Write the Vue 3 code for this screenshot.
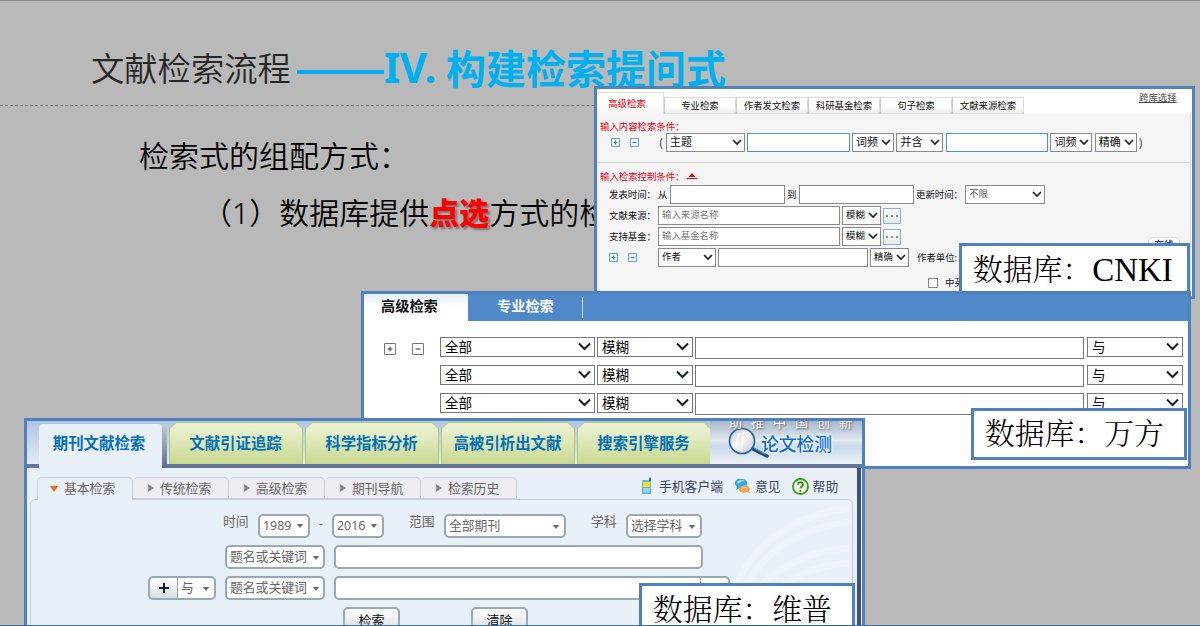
<script setup>
const cnkiTabs = ['高级检索', '专业检索', '作者发文检索', '科研基金检索', '句子检索', '文献来源检索']
const sources = [
  { label: '文献来源：', hint: '输入来源名称' },
  { label: '支持基金：', hint: '输入基金名称' },
]
const vipTabs = ['期刊文献检索', '文献引证追踪', '科学指标分析', '高被引析出文献', '搜索引擎服务']
const vipSubTabs = ['基本检索', '传统检索', '高级检索', '期刊导航', '检索历史']
</script>

<template>
  <div class="slide">
    <header class="title">
      <span class="titleMain">文献检索流程</span>
      <span class="dash"></span>
      <span class="numeral">IV.</span>
      <span class="titleSub">构建检索提问式</span>
    </header>
    <p class="line1">检索式的组配方式：</p>
    <p class="line2">（1）数据库提供<b>点选</b>方式的检</p>

    <!-- CNKI -->
    <section class="window cnki">
      <div class="cnkiTabs">
        <span v-for="(tab, i) in cnkiTabs" :key="tab" class="cnkiTab" :class="{ active: i === 0 }">{{ tab }}</span>
        <a class="cross">跨库选择</a>
      </div>
      <div class="cnkiPanel">
        <div class="red first">输入内容检索条件：</div>
        <div class="row contentRow">
          <svg class="sq" viewBox="0 0 9 9"><path d="M.5.5h8v8h-8z" /><path d="M2.500 4.500h4M4.500 2.500v4" class="mark" /></svg>
          <svg class="sq second" viewBox="0 0 9 9"><path d="M.5.5h8v8h-8z" /><path d="M2.500 4.500h4" class="mark" /></svg>
          <span class="paren">(</span>
          <div class="select subject">主题<svg viewBox="0 0 10 7"><path d="M1 1l4 4 4-4" /></svg></div>
          <div class="input blue"></div>
          <div class="select freq">词频<svg viewBox="0 0 10 7"><path d="M1 1l4 4 4-4" /></svg></div>
          <div class="select join">并含<svg viewBox="0 0 10 7"><path d="M1 1l4 4 4-4" /></svg></div>
          <div class="input blue"></div>
          <div class="select freq">词频<svg viewBox="0 0 10 7"><path d="M1 1l4 4 4-4" /></svg></div>
          <div class="select freq">精确<svg viewBox="0 0 10 7"><path d="M1 1l4 4 4-4" /></svg></div>
          <span class="parenEnd">)</span>
        </div>
        <div class="rule"></div>
        <div class="red control">
          输入检索控制条件：
          <svg viewBox="0 0 12 8"><path d="M6 1l3.500 4h-7zM1 6h10v1H1z" /></svg>
        </div>
        <div class="row dateRow">
          <span class="label">发表时间：</span>
          <span class="from">从</span>
          <div class="input date"></div>
          <span class="to">到</span>
          <div class="input date"></div>
          <span class="update">更新时间：</span>
          <div class="select limit">不限<svg viewBox="0 0 10 7"><path d="M1 1l4 4 4-4" /></svg></div>
        </div>
        <div v-for="s in sources" :key="s.label" class="row sourceRow">
          <span class="label">{{ s.label }}</span>
          <div class="input source">{{ s.hint }}</div>
          <div class="select small">模糊<svg viewBox="0 0 10 7"><path d="M1 1l4 4 4-4" /></svg></div>
          <div class="more"><i></i><i></i><i></i></div>
        </div>
        <div class="row authorRow">
          <svg class="sq" viewBox="0 0 9 9"><path d="M.5.5h8v8h-8z" /><path d="M2.500 4.500h4M4.500 2.500v4" class="mark" /></svg>
          <svg class="sq second" viewBox="0 0 9 9"><path d="M.5.5h8v8h-8z" /><path d="M2.500 4.500h4" class="mark" /></svg>
          <div class="select author">作者<svg viewBox="0 0 10 7"><path d="M1 1l4 4 4-4" /></svg></div>
          <div class="input name"></div>
          <div class="select small">精确<svg viewBox="0 0 10 7"><path d="M1 1l4 4 4-4" /></svg></div>
          <span class="unit">作者单位:</span>
        </div>
        <div class="row checkRow"><span class="box"></span>中英</div>
      </div>
      <div class="online">在线</div>
    </section>
    <div class="tag tagCnki">数据库：<span>CNKI</span></div>

    <!-- Wanfang -->
    <section class="window wanfang">
      <div class="wfBar">
        <span class="wfTab active">高级检索</span>
        <span class="wfTab">专业检索</span>
      </div>
      <div class="wfRows">
        <div v-for="n in 3" :key="n" class="wfRow">
          <div class="wfIcons">
            <template v-if="n === 1">
              <svg viewBox="0 0 12 12"><path d="M.5.5h11v11H.5z" /><path d="M3.500 6h5M6 3.500v5" class="mark" /></svg>
              <svg viewBox="0 0 12 12"><path d="M.5.5h11v11H.5z" /><path d="M3.500 6h5" class="mark" /></svg>
            </template>
          </div>
          <div class="wfSelect field">全部<svg viewBox="0 0 13 9"><path d="M1 1.500l5.500 5.500 5.500-5.500" /></svg></div>
          <div class="wfSelect match">模糊<svg viewBox="0 0 13 9"><path d="M1 1.500l5.500 5.500 5.500-5.500" /></svg></div>
          <div class="wfInput"></div>
          <div class="wfSelect match">与<svg viewBox="0 0 13 9"><path d="M1 1.500l5.500 5.500 5.500-5.500" /></svg></div>
        </div>
      </div>
    </section>
    <div class="tag tagWanfang">数据库：<span>万方</span></div>

    <!-- VIP -->
    <section class="window vip">
      <div class="vipTop">
        <span v-for="(tab, i) in vipTabs" :key="tab" class="vipTab" :class="{ active: i === 0 }"><em>{{ tab }}</em></span>
        <div class="banner">
          <div class="slogan">助推中国创新</div>
          <svg class="lens" viewBox="0 0 42 34">
            <defs>
              <linearGradient id="glass" x1="0" y1="0" x2="1" y2="1">
                <stop offset="0" stop-color="#c5c9cc" />
                <stop offset=".5" stop-color="#f4f5f6" />
                <stop offset="1" stop-color="#bcc6cf" />
              </linearGradient>
            </defs>
            <path d="M25 23l14 7" stroke="#174f7b" stroke-width="3.500" stroke-linecap="round" />
            <path d="M26 22l11 6" stroke="#62a6d5" stroke-width="1" />
            <circle cx="14" cy="15" r="12.500" fill="url(#glass)" stroke="#246797" stroke-width="1.700" />
            <path d="M8 21l3-14M13 25l3-19" stroke="#fff" stroke-width="2" opacity=".6" />
          </svg>
          <span class="check">论文检测</span>
        </div>
      </div>
      <div class="vipBody">
        <div class="subBar">
          <span v-for="(tab, i) in vipSubTabs" :key="tab" class="subTab" :class="{ active: i === 0 }"><i></i>{{ tab }}</span>
          <div class="links">
            <svg class="phone" viewBox="0 0 11 17">
              <path d="M1 2h9v14H1z" fill="#59b5ee" />
              <path d="M8 0h2v3H8z" fill="#1673b5" />
              <path d="M2 4h7v5H2z" fill="#ffdf16" />
              <path d="M2 11h7M2 13h7M4 10v5M7 10v5" stroke="#d6efff" stroke-width=".7" />
            </svg>
            <span class="client">手机客户端</span>
            <svg class="chat" viewBox="0 0 17 16">
              <path d="M1 5C1 1 5 0 8 1c4 0 6 3 5 6-1 2-4 3-7 3l-4 2 1-4C1 8 1 7 1 5z" fill="#36a9e8" />
              <path d="M3 4c2-3 6-2 8-1-3 0-5 1-7 3z" fill="#a4e0ff" />
              <path d="M5 11c1-4 8-5 10-2 1 1 1 3 0 4l1 2-3-1c-4 2-8 0-8-3z" fill="#f4a24b" />
              <path d="M7 12c2-3 4-3 6-2" stroke="#ffe0b4" />
            </svg>
            <span class="opinion">意见</span>
            <svg class="help" viewBox="0 0 17 17">
              <circle cx="8.500" cy="8.500" r="7.500" fill="#f8fff4" stroke="#35a015" stroke-width="1.800" />
              <path d="M6 6.700C6 3.500 11 3.600 11 6.500c0 2-2.500 2-2.500 4M8.500 12v1.700" stroke="#359b16" stroke-width="1.900" />
            </svg>
            <span>帮助</span>
          </div>
        </div>
        <div class="form">
          <svg class="swirl" viewBox="0 0 120 100">
            <path d="M2 90C20 45 60 15 118 8M8 95C30 50 70 28 118 22M20 95C45 65 80 50 118 48M35 98C60 75 90 64 118 63" />
          </svg>
          <div class="vRow top">
            <span class="vLabel">时间</span>
            <div class="drop year">1989<i></i></div>
            <span class="hyphen">-</span>
            <div class="drop year">2016<i></i></div>
            <span class="vLabel range">范围</span>
            <div class="drop journal">全部期刊<i></i></div>
            <span class="vLabel range">学科</span>
            <div class="drop subjectDrop">选择学科<i></i></div>
          </div>
          <div class="vRow keyRow">
            <div class="drop keyword">题名或关键词<i></i></div>
            <div class="vInput"></div>
          </div>
          <div class="vRow plusRow">
            <div class="plus"><svg viewBox="0 0 12 12"><path d="M6 1v10M1 6h10" /></svg></div>
            <div class="drop and">与<i></i></div>
            <div class="drop keyword">题名或关键词<i></i></div>
            <div class="vInput long"><span></span></div>
          </div>
          <div class="vRow buttons">
            <button>检索</button>
            <button>清除</button>
          </div>
        </div>
      </div>
    </section>
    <div class="tag tagVip">数据库：<span>维普</span></div>
  </div>
</template>

<style>
body {
  margin: 0;
  overflow: hidden;
}
</style>

<style scoped>
* {
  box-sizing: border-box;
}

.slide {
  position: relative;
  width: 1200px;
  height: 626px;
  overflow: hidden;
  background: #b9b9b9;
  border-top: 1px solid #858585;
  border-bottom: 1px solid #3d6c98;
  font-family: 'Noto Sans', 'Noto Sans CJK SC', sans-serif;
  white-space: nowrap;
}

svg {
  flex: none;
  fill: none;
}

/* slide text */
.title {
  display: flex;
  align-items: center;
  width: 800px;
  height: 105px;
  padding: 28px 0 0 91px;
  border-bottom: 1px dashed #777;
  line-height: 60px;
}

.titleMain {
  width: 206px;
  color: #262626;
  font-family: 'Noto Sans CJK SC DemiLight', 'Noto Sans CJK SC', sans-serif;
  font-size: 33.3px;
  font-weight: 350;
}

.dash {
  width: 87px;
  height: 4px;
  margin-top: 9px;
  background: #00b0f0;
}

.numeral {
  width: 62px;
  color: #00b0f0;
  font-size: 42px;
  font-weight: bold;
  letter-spacing: -0.5px;
}

.titleSub {
  color: #00b0f0;
  font-family: 'Noto Sans CJK SC', sans-serif;
  font-size: 40px;
  font-weight: bold;
}

.line1,
.line2 {
  margin: 0;
  height: 54px;
  font-family: 'Noto Sans', 'Noto Sans CJK SC DemiLight', 'Noto Sans CJK SC', sans-serif;
  font-size: 30px;
  line-height: 54px;
  font-weight: 350;
}

.line1 {
  padding: 23px 0 0 139px;
  height: 78px;
}

.line2 {
  padding-left: 202px;
}

.line2 b {
  color: #f00;
  font-family: 'Noto Sans CJK SC', sans-serif;
  font-weight: 900;
  text-shadow: 2px 2px 2px #777;
}

/* pasted windows */
.window {
  position: absolute;
  overflow: hidden;
  border: 3px solid #4f81bd;
  background: #fff;
  font-family: 'Noto Sans CJK SC', sans-serif;
}

.tag {
  position: absolute;
  display: flex;
  align-items: center;
  border: 3px solid #4f81bd;
  background: #fff;
  padding-left: 11px;
  font-family: 'Liberation Serif', 'Noto Serif CJK SC', 'Noto Sans CJK SC', serif;
  font-size: 29.8px;
  font-weight: 300;
  line-height: 46px;
}

.tagCnki {
  left: 959px;
  top: 242px;
  width: 231px;
  height: 54px;
}

.tagCnki span {
  font-size: 33px;
}

.tagWanfang {
  left: 971px;
  top: 407px;
  width: 216px;
  height: 52px;
}

.tagVip {
  left: 639px;
  top: 582px;
  width: 216px;
  height: 54px;
}

/* CNKI */
.cnki {
  left: 594px;
  top: 85px;
  width: 601px;
  height: 213px;
  font-size: 9.4px;
  color: #111;
}

.cnkiTabs {
  display: flex;
  align-items: flex-end;
  height: 25px;
}

.cnkiTab {
  width: 72px;
  height: 17px;
  line-height: 14px;
  text-align: center;
  border: 1px solid #ddd;
  border-left: 1px solid #ccc;
  background: linear-gradient(#fff 50%, #eee);
}

.cnkiTab.active {
  width: 67px;
  height: 22px;
  padding-right: 6px;
  line-height: 20px;
  color: #e60012;
  border-left: 0;
  border-bottom: 0;
  background: linear-gradient(#fff 40%, #f5f5f5);
}

.cross {
  margin-left: 115px;
  align-self: flex-start;
  line-height: 16px;
  color: #444;
  text-decoration: underline;
}

.cnkiPanel {
  width: 594px;
  height: 190px;
  background: #f5f5f5;
  border-right: 1px solid #ddd;
}

.red {
  display: flex;
  align-items: center;
  padding-left: 3px;
  color: #e60012;
}

.first {
  height: 19px;
  padding-top: 4px;
}

.row {
  display: flex;
  align-items: center;
  height: 19px;
  line-height: 15px;
}

.contentRow {
  padding-left: 14px;
}

.sq {
  width: 9px;
  height: 9px;
  margin-top: -1px;
  stroke: #5aa9d6;
}

.sq .mark {
  stroke: #2d7fb5;
}

.sq.second {
  margin-left: 10px;
}

.paren {
  width: 7px;
  margin-left: 20px;
  font-size: 11px;
}

.parenEnd {
  font-size: 11px;
}

.select,
.input {
  display: flex;
  align-items: center;
  height: 19px;
  padding: 0 0 2px 3px;
  border: 1px solid #8a8a8a;
  background: #fff;
}

.select {
  justify-content: space-between;
  padding-right: 2px;
}

.select svg {
  width: 10px;
  height: 7px;
  margin-top: 1px;
  stroke: #222;
  stroke-width: 1.7;
}

.contentRow .select,
.contentRow .input {
  margin-right: 2.3px;
  font-size: 11px;
}

.subject {
  width: 79px;
}

.input.blue {
  width: 102.5px;
  border-color: #4c91d3;
}

.freq {
  width: 42px;
}

.join {
  width: 47px;
}

.rule {
  height: 1px;
  margin: 10px 0 4px;
  background: #d8d8d8;
}

.control {
  height: 17px;
  margin-bottom: 1px;
}

.control svg {
  width: 12px;
  height: 8px;
  margin-left: 2px;
  fill: #e60012;
}

.dateRow {
  padding-left: 12px;
}

.label {
  width: 49px;
}

.from {
  width: 12px;
}

.date {
  width: 115px;
}

.to {
  width: 14px;
  padding-left: 2px;
}

.update {
  width: 51px;
  padding-left: 2px;
}

.limit {
  width: 80px;
  color: #555;
}

.sourceRow {
  margin-top: 2px;
  padding-left: 12px;
  gap: 2px;
}

.sourceRow .label {
  width: 47px;
}

.source {
  width: 182px;
  color: #777;
}

.small {
  width: 39px;
}

.more {
  display: flex;
  align-items: center;
  justify-content: center;
  gap: 3px;
  width: 18px;
  height: 16px;
  border: 1px solid #8eb0cf;
  background: linear-gradient(#fff, #e6ebe6);
}

.more i {
  width: 2px;
  height: 2px;
  background: #6d97bf;
}

.authorRow {
  margin-top: 2px;
  padding-left: 12px;
}

.author {
  width: 58px;
  margin-left: 21px;
}

.name {
  width: 150px;
  margin: 0 2px;
}

.unit {
  margin-left: 8px;
}

.checkRow {
  margin-top: 6px;
  padding-left: 331px;
}

.box {
  width: 10px;
  height: 10px;
  margin-right: 7px;
  border: 1px solid #888;
  background: #fff;
}

.online {
  position: absolute;
  left: 551px;
  top: 148px;
  width: 32px;
  height: 18px;
  border: 1px solid #ddd;
  border-radius: 4px;
  background: #fafafa;
  color: #17389b;
  font-weight: bold;
  line-height: 13px;
  text-align: center;
}

/* Wanfang */
.wanfang {
  left: 361px;
  top: 290px;
  width: 830px;
  height: 178px;
}

.wfBar {
  display: flex;
  height: 27px;
  background: #4f89ca;
}

.wfTab {
  width: 115px;
  height: 21px;
  margin-top: 3px;
  padding-left: 29px;
  border-right: 1px solid #c4daf0;
  color: #fff;
  font-size: 14.2px;
  font-weight: bold;
  line-height: 17px;
}

.wfTab.active {
  width: 104px;
  height: 27px;
  margin-top: 0;
  padding-left: 17px;
  border: 0;
  background: linear-gradient(#e3f0f7, #fff 50%);
  color: #111;
  line-height: 23px;
}

.wfRows {
  display: flex;
  flex-direction: column;
  gap: 6px;
  padding-top: 16px;
}

.wfRow {
  display: flex;
  height: 22px;
}

.wfIcons {
  display: flex;
  gap: 16px;
  width: 76px;
  padding: 6px 0 0 20px;
}

.wfIcons svg {
  width: 12px;
  height: 12px;
  stroke: #777;
}

.wfIcons .mark {
  stroke: #333;
}

.wfSelect {
  display: flex;
  align-items: center;
  justify-content: space-between;
  height: 20px;
  padding: 0 3px 2px 4px;
  border: 1px solid #777;
  font-size: 13.5px;
  line-height: 16px;
}

.wfSelect svg {
  width: 13px;
  height: 9px;
  stroke: #151b2b;
  stroke-width: 2;
}

.field {
  width: 155px;
  margin-right: 2px;
}

.match {
  width: 96px;
}

.wfInput {
  width: 389px;
  margin: 0 3px 0 2px;
  border: 1px solid #777;
}

/* VIP */
.vip {
  left: 24px;
  top: 417px;
  width: 841px;
  height: 220px;
  background: #eaf0f8;
  color: #666;
  font-size: 12.8px;
}

.vipTop {
  display: flex;
  align-items: flex-end;
  gap: 2px;
  height: 47px;
  padding-left: 12px;
  border-bottom: 4px solid #67749a;
  background: linear-gradient(#aec6e4, #e3ebf5);
}

.vipTab {
  width: 134px;
  height: 42px;
  padding: 1px;
  background: #b3c576;
  clip-path: polygon(7px 0, 127px 0, 100% 7px, 100% 100%, 0 100%, 0 7px);
}

.vipTab em {
  display: block;
  height: 41px;
  background: linear-gradient(#edf3d5, #dce7b4 50%, #c8d98f);
  clip-path: polygon(6px 0, 126px 0, 100% 6px, 100% 100%, 0 100%, 0 6px);
  color: #0070bb;
  font-size: 15.4px;
  font-style: normal;
  font-weight: bold;
  line-height: 38px;
  text-align: center;
  text-indent: -1px;
}

.vipTab.active {
  flex: none;
  width: 128px;
  height: 44px;
  margin: 0 0 -4px;
  padding: 0 5px 0 0;
  background: linear-gradient(#c3cad9, #5e6b90);
  clip-path: none;
}

.vipTab.active em {
  height: 44px;
  border-radius: 4px 4px 0 0;
  background: #eaf0f8;
  clip-path: none;
  line-height: 36px;
  text-indent: -3px;
}

.banner {
  display: flex;
  position: relative;
  flex: 1;
  align-items: center;
  height: 43px;
  margin-left: -3px;
  padding: 1px 0 0 18px;
  overflow: hidden;
  background: linear-gradient(180deg, #a9b6c6 0, #dfe9f2 45%, #c8d7e7 60%, #eef2f7);
}

.slogan {
  position: absolute;
  right: 1px;
  top: -9px;
  color: #f4f6f8;
  font-size: 13px;
  letter-spacing: 9px;
  line-height: 20px;
  text-shadow: 1px 1px 2px #667;
}

.lens {
  width: 42px;
  height: 34px;
  margin-right: -9px;
}

.check {
  position: relative;
  color: #0b6ed8;
  font-size: 17.8px;
  font-weight: 500;
  text-shadow: 0 0 3px #fff, 0 0 4px #fff;
}

.vipBody {
  width: 834px;
  height: 170px;
  padding: 9px 4px 0 3px;
  border-right: 4px solid #424f78;
}

.subBar {
  display: flex;
  height: 22px;
  padding-left: 7px;
}

.subTab {
  display: flex;
  align-items: center;
  width: 96px;
  height: 22px;
  padding-left: 15px;
  border: 1px solid #c8cedf;
  border-left: 0;
  border-radius: 5px 5px 0 0;
  background: #eeedf1;
  line-height: 18px;
  padding-bottom: 1px;
}

.subTab i {
  width: 6px;
  margin-right: 6px;
  border: 4.5px solid transparent;
  border-left: 6px solid #888;
  border-right: 0;
}

.subTab.active {
  position: relative;
  height: 23px;
  padding: 0 0 2px 12px;
  border-left: 1px solid #c8cedf;
  border-bottom: 0;
  background: #eaf0f8;
}

.subTab.active i {
  width: 8px;
  margin: 2px 6px 0 0;
  border: 4px solid transparent;
  border-top: 6px solid #f36b12;
  border-bottom: 0;
}

.links {
  display: flex;
  align-items: center;
  height: 18px;
  margin-left: 124px;
  color: #39435f;
  line-height: 16px;
}

.phone {
  width: 11px;
  height: 17px;
  margin-right: 7px;
}

.client {
  margin-right: 11px;
}

.chat {
  width: 17px;
  height: 16px;
  margin-right: 4px;
}

.opinion {
  margin-right: 11px;
}

.help {
  width: 17px;
  height: 17px;
  margin-right: 4px;
}

.form {
  position: relative;
  width: 823px;
  height: 150px;
  padding-top: 14px;
  border: 1px solid #c3cfe0;
  border-radius: 5px;
}

.subTab.active {
  z-index: 1;
}

.swirl {
  position: absolute;
  right: 0;
  top: 0;
  width: 120px;
  height: 100px;
  stroke: #fff;
  stroke-width: 7;
  opacity: 0.22;
}

.vRow {
  display: flex;
  position: relative;
  height: 24px;
  margin-bottom: 7px;
}

.top {
  padding-left: 192px;
}

.vLabel {
  width: 35px;
  line-height: 14px;
}

.range {
  margin-left: 25px;
}

.drop {
  display: flex;
  align-items: center;
  justify-content: space-between;
  height: 24px;
  padding: 0 5px 2px 3px;
  border: 2px solid #9aa8b3;
  border-radius: 5px;
  background: #fff;
  line-height: 18px;
}

.drop i {
  margin-top: 3px;
  border: 3.5px solid transparent;
  border-top: 4px solid #666;
  border-bottom: 0;
}

.year {
  width: 52px;
  padding-bottom: 0;
  font-family: 'Noto Sans', sans-serif;
  font-size: 12.4px;
}

.year i {
  margin-top: 0;
}

.hyphen {
  width: 22px;
  line-height: 18px;
  text-align: center;
}

.journal {
  width: 122px;
}

.subjectDrop {
  width: 76px;
}

.keyRow {
  padding-left: 194px;
}

.keyword {
  width: 100px;
  padding: 0 4px 2px 3px;
}

.vInput {
  width: 369px;
  margin-left: 9px;
  border: 2px solid #9aa8b3;
  border-radius: 5px;
  background: #fff;
}

.long {
  display: flex;
  justify-content: flex-end;
  width: 396px;
}

.long span {
  width: 28px;
  border-left: 1px solid #9aa8b3;
}

.plusRow {
  padding-left: 117px;
}

.plus {
  display: flex;
  align-items: center;
  justify-content: center;
  width: 30px;
  border: 2px solid #9aa8b3;
  border-right-width: 1px;
  border-radius: 5px 0 0 5px;
  background: linear-gradient(#fff, #d8dfe4);
}

.plus svg {
  width: 12px;
  height: 12px;
  stroke: #222;
  stroke-width: 2;
}

.and {
  width: 38px;
  margin-right: 9px;
  border-left: 0;
  border-radius: 0 5px 5px 0;
}

.buttons {
  gap: 71px;
  padding-left: 312px;
}

button {
  width: 57px;
  height: 28px;
  padding: 0 0 4px;
  border: 2px solid #9aa8b3;
  border-radius: 5px;
  background: linear-gradient(#fff, #d3dbe0);
  color: #111;
  font-family: inherit;
  font-size: 13px;
}
</style>
